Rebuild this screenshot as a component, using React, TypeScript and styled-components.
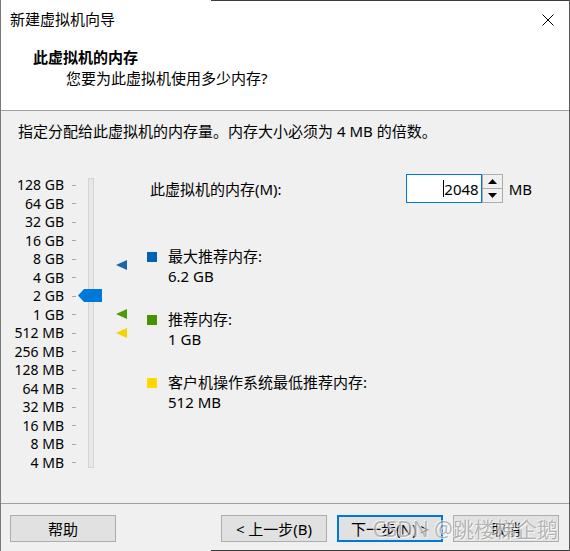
import React from "react";
import styled, { createGlobalStyle } from "styled-components";

const GlobalStyle = createGlobalStyle`
  html, body {
    margin: 0;
    padding: 0;
    background: #ffffff;
  }
  body {
    font-family: "Noto Sans", "Noto Sans CJK SC", sans-serif;
    font-size: 15px;
    color: #000000;
  }
`;

const ROW = 18.53;

const Window = styled.div`
  position: relative;
  width: 570px;
  height: 551px;
  box-sizing: border-box;
  border-left: 1px solid #7a7a7a;
  border-right: 1px solid #5a5a5a;
  display: flex;
  flex-direction: column;
  background: #f0f0f0;
  overflow: hidden;

  &::before,
  &::after {
    content: "";
    position: absolute;
    left: 210px;
    right: 0;
    height: 1px;
    background: #3c3c3c;
  }
  &::before {
    top: 0;
  }
  &::after {
    bottom: 0;
  }
`;

const TitleBar = styled.div`
  height: 38px;
  background: #ffffff;
  display: flex;
  align-items: center;
  justify-content: space-between;
  padding: 0 15px 0 9px;
  box-sizing: border-box;
  line-height: 20px;
`;

const CloseIcon = styled.svg`
  display: block;
  margin-top: 1px;
`;

const Header = styled.div`
  background: #ffffff;
  padding: 9px 0 22px 32px;
  border-bottom: 1px solid #a0a0a0;
  line-height: 20px;
`;

const Heading = styled.div`
  font-weight: 700;
`;

const SubHeading = styled.div`
  padding-left: 33px;
  margin-top: 1px;
`;

const Body = styled.div`
  flex: 1;
  padding-top: 10px;
`;

const Intro = styled.div`
  padding-left: 17px;
  line-height: 20px;
`;

const Main = styled.div`
  display: flex;
  margin-top: 33px;
`;

const Scale = styled.div`
  display: flex;
  padding-top: 2px;
`;

const Labels = styled.div`
  width: 63px;
  display: grid;
  grid-template-rows: repeat(16, ${ROW}px);
`;

const Label = styled.div`
  text-align: right;
  font-size: 14px;
  line-height: ${ROW}px;
  white-space: nowrap;
`;

const Ticks = styled.div`
  width: 24px;
  display: grid;
  grid-template-rows: repeat(16, ${ROW}px);
`;

const Tick = styled.div`
  display: flex;
  align-items: center;
  padding-left: 8px;

  &::before {
    content: "";
    width: 4px;
    height: 1px;
    background: #a8a8a8;
  }
`;

const TrackColumn = styled.div`
  position: relative;
  width: 6px;
  padding-top: 2px;
`;

const Rail = styled.div`
  width: 4px;
  height: 288px;
  background: #e7e7e7;
  border: 1px solid #d4d4d4;
`;

const Thumb = styled.svg`
  position: absolute;
  left: -10px;
  display: block;
`;

const ArrowColumn = styled.div`
  position: relative;
  width: 53px;
`;

const Arrow = styled.svg`
  position: absolute;
  left: 22px;
  display: block;
`;

const Content = styled.div`
  flex: 1;
  display: flex;
  flex-direction: column;
`;

const MemoryRow = styled.div`
  display: flex;
  align-items: center;
  height: 29px;
  padding-right: 37px;
`;

const MemoryLabel = styled.div`
  flex: 1;
  padding-left: 3px;
  line-height: 20px;
`;

const SpinBox = styled.div`
  display: flex;
  align-items: stretch;
  height: 29px;
`;

const NumberField = styled.div`
  width: 76px;
  box-sizing: border-box;
  border: 1px solid #0078d7;
  background: #ffffff;
  display: flex;
  align-items: center;
  justify-content: flex-end;
  padding-right: 2px;
  font-size: 15px;
`;

const Caret = styled.span`
  width: 1px;
  height: 17px;
  background: #000000;
`;

const Spinner = styled.div`
  width: 21px;
  display: flex;
  flex-direction: column;
`;

const SpinButton = styled.div`
  flex: 1;
  box-sizing: border-box;
  border: 1px solid #adadad;
  background: #f0f0f0;
  display: flex;
  align-items: center;
  justify-content: center;
  & + & {
    border-top-width: 0;
  }
`;

const Unit = styled.div`
  margin-left: 6px;
  line-height: 20px;
  align-self: center;
`;

const Legend = styled.div`
  display: flex;
  flex-direction: column;
  gap: 24px;
  margin-top: 44px;
`;

const LegendItem = styled.div`
  display: flex;
  gap: 11px;
  line-height: 19.5px;
`;

const Swatch = styled.div<{ $color: string }>`
  width: 10px;
  height: 10px;
  margin-top: 5px;
  background: ${(p) => p.$color};
  flex-shrink: 0;
`;

const Footer = styled.div`
  height: 48px;
  box-sizing: border-box;
  border-top: 1px solid #a0a0a0;
  display: flex;
  align-items: flex-start;
  padding: 11px 10px 0 9px;
`;

const Spacer = styled.div`
  flex: 1;
`;

const DialogButton = styled.div<{ $default?: boolean }>`
  width: 106px;
  height: 27px;
  box-sizing: border-box;
  background: #e1e1e1;
  border: ${(p) => (p.$default ? "2px solid #0078d7" : "1px solid #adadad")};
  display: flex;
  align-items: center;
  justify-content: center;
  line-height: 20px;
  & + & {
    margin-left: 10px;
  }
`;

const Watermark = styled.div`
  position: absolute;
  right: 11px;
  bottom: 10px;
  font-size: 21px;
  line-height: 24px;
  color: rgba(140, 140, 140, 0.6);
  text-shadow: 1px 1px 0 rgba(255, 255, 255, 0.7), -1px -1px 0 rgba(255, 255, 255, 0.5);
  white-space: nowrap;
  pointer-events: none;
`;

const scaleLabels = [
  "128 GB",
  "64 GB",
  "32 GB",
  "16 GB",
  "8 GB",
  "4 GB",
  "2 GB",
  "1 GB",
  "512 MB",
  "256 MB",
  "128 MB",
  "64 MB",
  "32 MB",
  "16 MB",
  "8 MB",
  "4 MB",
];

// position on the log2 scale, 0 = 128 GB
const rowFor = (gb: number) => Math.log2(128) - Math.log2(gb);

const markers = [
  { gb: 6.2, color: "#1a63ad" },
  { gb: 1, color: "#4a9a0a" },
  { gb: 0.5, color: "#f5d200" },
];

const legend = [
  { color: "#0063b1", title: "最大推荐内存:", value: "6.2 GB" },
  { color: "#489300", title: "推荐内存:", value: "1 GB" },
  { color: "#ffd800", title: "客户机操作系统最低推荐内存:", value: "512 MB" },
];

const currentGb = 2;

const App: React.FC = () => {
  return (
    <>
      <GlobalStyle />
      <Window>
        <TitleBar>
          <span>新建虚拟机向导</span>
          <CloseIcon width="12" height="12" viewBox="0 0 12 12">
            <path d="M0.5 0.5 L11.5 11.5 M11.5 0.5 L0.5 11.5" stroke="#000" strokeWidth="1" />
          </CloseIcon>
        </TitleBar>
        <Header>
          <Heading>此虚拟机的内存</Heading>
          <SubHeading>您要为此虚拟机使用多少内存?</SubHeading>
        </Header>

        <Body>
          <Intro>指定分配给此虚拟机的内存量。内存大小必须为 4 MB 的倍数。</Intro>
          <Main>
            <Scale>
              <Labels>
                {scaleLabels.map((l) => (
                  <Label key={l}>{l}</Label>
                ))}
              </Labels>
              <Ticks>
                {scaleLabels.map((l) => (
                  <Tick key={l} />
                ))}
              </Ticks>
              <TrackColumn>
                <Rail />
                <Thumb
                  width="24"
                  height="13"
                  viewBox="0 0 24 13"
                  style={{ top: rowFor(currentGb) * ROW + ROW / 2 - 7 }}
                >
                  <polygon points="0,6.5 6,0 24,0 24,13 6,13" fill="#0078d7" />
                </Thumb>
              </TrackColumn>
              <ArrowColumn>
                {markers.map((m) => (
                  <Arrow
                    key={m.color}
                    width="11"
                    height="10"
                    viewBox="0 0 11 10"
                    style={{ top: rowFor(m.gb) * ROW + ROW / 2 - 6 }}
                  >
                    <polygon points="0,5 11,0 11,10" fill={m.color} />
                  </Arrow>
                ))}
              </ArrowColumn>
            </Scale>

            <Content>
              <MemoryRow>
                <MemoryLabel>此虚拟机的内存(M):</MemoryLabel>
                <SpinBox>
                  <NumberField>
                    <Caret />
                    2048
                  </NumberField>
                  <Spinner>
                    <SpinButton>
                      <svg width="9" height="5" viewBox="0 0 9 5">
                        <polygon points="0,5 4.5,0 9,5" fill="#000" />
                      </svg>
                    </SpinButton>
                    <SpinButton>
                      <svg width="9" height="5" viewBox="0 0 9 5">
                        <polygon points="0,0 9,0 4.5,5" fill="#000" />
                      </svg>
                    </SpinButton>
                  </Spinner>
                  <Unit>MB</Unit>
                </SpinBox>
              </MemoryRow>

              <Legend>
                {legend.map((item) => (
                  <LegendItem key={item.title}>
                    <Swatch $color={item.color} />
                    <div>
                      <div>{item.title}</div>
                      <div>{item.value}</div>
                    </div>
                  </LegendItem>
                ))}
              </Legend>
            </Content>
          </Main>
        </Body>

        <Footer>
          <DialogButton>帮助</DialogButton>
          <Spacer />
          <DialogButton>&lt; 上一步(B)</DialogButton>
          <DialogButton $default>下一步(N) &gt;</DialogButton>
          <DialogButton>取消</DialogButton>
        </Footer>

        <Watermark>CSDN @跳楼梯企鹅</Watermark>
      </Window>
    </>
  );
};

export default App;
